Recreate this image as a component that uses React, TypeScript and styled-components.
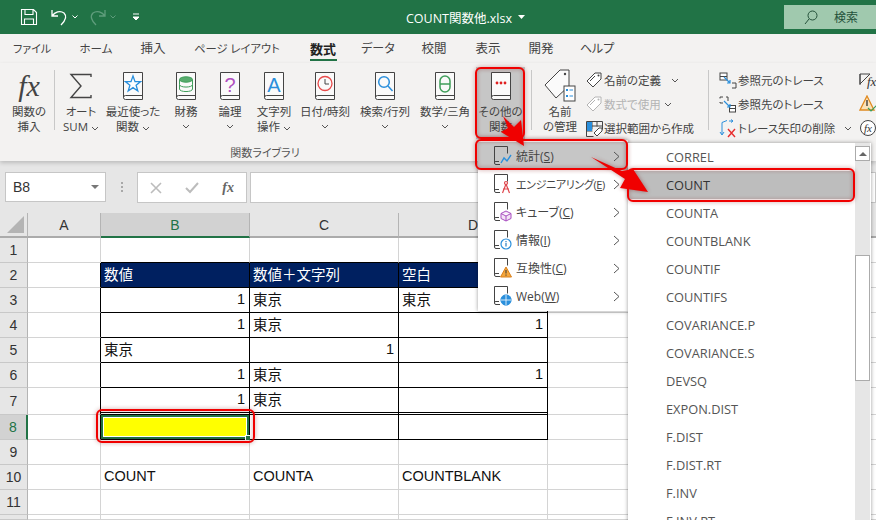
import { Fragment } from 'react';
import type { ReactNode } from 'react';
import styled, { createGlobalStyle } from 'styled-components';

const uiFont = '"Open Sans", "Noto Sans CJK JP", sans-serif';
const cellFont = '"Liberation Sans", "Noto Sans CJK JP", sans-serif';

const GlobalStyle = createGlobalStyle`
html, body {
  margin: 0;
  padding: 0;
  background: #fff;
}
body {
  font-family: ${uiFont};
  font-feature-settings: "palt";
}
`;

const Page = styled.div`
position: relative;
width: 876px;
height: 520px;
overflow: hidden;
display: flex;
flex-direction: column;
background: #fff;
`;

/* title bar */
const TitleBar = styled.div`
height: 34px;
flex: none;
display: flex;
align-items: center;
background: #217346;
color: #fff;
`;

const QuickTools = styled.div`
width: 406px;
flex: none;
display: flex;
align-items: center;
padding-left: 20px;
box-sizing: border-box;
`;

const QuickIcon = styled.svg<{ $gap?: number }>`
flex: none;
margin-right: ${(p) => p.$gap ?? 0}px;
`;

const FileName = styled.div`
font-size: 12.5px;
white-space: nowrap;
display: flex;
align-items: center;
gap: 6px;
`;

const SearchBox = styled.div`
margin-left: auto;
width: 92px;
height: 24px;
background: #a0c9ae;
color: #24513a;
font-size: 12px;
display: flex;
align-items: center;
padding-left: 20px;
gap: 16px;
box-sizing: border-box;
`;

/* tabs */
const TabRow = styled.div`
height: 29px;
flex: none;
display: flex;
background: #f3f2f1;
`;

const Tab = styled.div<{ $w: number; $size: number; $active?: boolean }>`
position: relative;
width: ${(p) => p.$w}px;
text-align: center;
line-height: 30px;
font-size: ${(p) => p.$size}px;
white-space: nowrap;
color: ${(p) => (p.$active ? '#222' : '#444')};
font-weight: ${(p) => (p.$active ? 700 : 400)};
&::after {
  content: '';
  display: ${(p) => (p.$active ? 'block' : 'none')};
  position: absolute;
  left: 14px;
  right: 13px;
  bottom: 2px;
  height: 2px;
  background: #217346;
}
`;

/* ribbon */
const Ribbon = styled.div`
height: 98px;
flex: none;
display: flex;
padding: 4px 0 0 5px;
box-sizing: border-box;
background: #f3f2f1;
overflow: hidden;
box-shadow: 0 2px 4px rgba(0, 0, 0, 0.18);
position: relative;
`;

const Group = styled.div`
display: flex;
flex-direction: column;
flex: none;
`;

const Tools = styled.div`
display: flex;
height: 72px;
`;

const GroupLabel = styled.div`
margin-top: 5px;
text-align: center;
font-size: 11px;
color: #555;
`;

const BigButton = styled.div<{ $w: number; $left?: number; $active?: boolean }>`
width: ${(p) => p.$w}px;
margin-left: ${(p) => p.$left ?? 0}px;
flex: none;
display: flex;
flex-direction: column;
align-items: center;
padding-top: 5px;
box-sizing: border-box;
background: ${(p) => (p.$active ? '#c6c6c6' : 'transparent')};
`;

const BigIcon = styled.div`
height: 28px;
display: flex;
align-items: center;
justify-content: center;
`;

const FxMark = styled.span`
font-family: "Liberation Serif", serif;
font-style: italic;
font-size: 30px;
line-height: 28px;
color: #444;
`;

const BigLabel = styled.div`
margin-top: 5px;
font-size: 11.5px;
line-height: 14.5px;
color: #444;
text-align: center;
white-space: nowrap;
`;

const ChevronLine = styled.div`
height: 14px;
display: flex;
align-items: center;
justify-content: center;
`;

const RibbonSep = styled.div<{ $left?: number; $right?: number }>`
width: 1px;
height: 60px;
flex: none;
margin: 3px ${(p) => p.$right ?? 0}px 0 ${(p) => p.$left ?? 0}px;
background: #c8c8c8;
`;

const ListColumn = styled.div<{ $w: number; $left?: number }>`
width: ${(p) => p.$w}px;
flex: none;
margin-left: ${(p) => p.$left ?? 0}px;
display: flex;
flex-direction: column;
padding-top: 1px;
`;

const ListRow = styled.div<{ $disabled?: boolean }>`
height: 24px;
display: flex;
align-items: center;
gap: 1px;
font-size: 11.5px;
white-space: nowrap;
color: ${(p) => (p.$disabled ? '#b4b4b4' : '#444')};
& > svg {
  flex: none;
}
`;

const RowChevron = styled.span<{ $left: number }>`
display: inline-flex;
margin-left: ${(p) => p.$left}px;
`;

/* formula bar */
const FormulaBar = styled.div`
height: 52px;
flex: none;
display: flex;
align-items: flex-start;
padding: 11px 0 0 5px;
box-sizing: border-box;
background: #e6e6e6;
`;

const NameBox = styled.div`
width: 101px;
height: 30px;
flex: none;
background: #fff;
border: 1px solid #c6c6c6;
box-sizing: border-box;
display: flex;
align-items: center;
justify-content: space-between;
padding: 0 4px 0 7px;
font-family: ${cellFont};
font-size: 14px;
color: #333;
`;

const Caret = styled.span`
width: 0;
height: 0;
border-left: 4px solid transparent;
border-right: 4px solid transparent;
border-top: 4px solid #777;
margin-right: 2px;
`;

const GripDots = styled.div`
width: 31px;
flex: none;
display: flex;
flex-direction: column;
align-items: center;
gap: 2px;
padding-top: 10px;
& > i {
  width: 2px;
  height: 2px;
  background: #a8a8a8;
}
`;

const FormulaButtons = styled.div`
width: 110px;
height: 31px;
flex: none;
background: #fff;
border: 1px solid #c6c6c6;
box-sizing: border-box;
display: flex;
align-items: center;
justify-content: space-between;
padding: 0 12px;
`;

const FormulaFx = styled.span`
font-family: "Liberation Serif", serif;
font-style: italic;
font-weight: 700;
font-size: 14px;
color: #666;
`;

const FormulaInput = styled.div`
flex: 1;
height: 31px;
margin-left: 3px;
background: #fff;
border: 1px solid #c6c6c6;
box-sizing: border-box;
`;

/* sheet */
const Sheet = styled.div`
flex: 1;
display: grid;
grid-template-columns: 28px 73px 149px 149px 149px 149px 149px 31px;
grid-template-rows: 25px repeat(6, 25px) 27px repeat(3, 25px) 25px 5px;
overflow: hidden;
font-family: ${cellFont};
font-size: 14.5px;
color: #111;
`;

const Corner = styled.div`
background: #e6e6e6;
border-right: 1px solid #b4b4b4;
border-bottom: 2px solid #ababab;
box-sizing: border-box;
display: flex;
align-items: flex-end;
justify-content: flex-end;
padding: 0 3px 3px 0;
`;

const ColHead = styled.div<{ $sel?: boolean }>`
display: flex;
align-items: center;
justify-content: center;
box-sizing: border-box;
font-size: 14px;
background: ${(p) => (p.$sel ? '#d2d2d2' : '#e6e6e6')};
color: ${(p) => (p.$sel ? '#217346' : '#333')};
border-right: 1px solid #b4b4b4;
border-bottom: 2px solid ${(p) => (p.$sel ? '#217346' : '#ababab')};
`;

const RowHead = styled.div<{ $sel?: boolean }>`
display: flex;
align-items: center;
justify-content: center;
box-sizing: border-box;
padding-bottom: 1px;
font-size: 14px;
background: ${(p) => (p.$sel ? '#d2d2d2' : '#e6e6e6')};
color: ${(p) => (p.$sel ? '#217346' : '#333')};
border-right: ${(p) => (p.$sel ? '2px solid #217346' : '1px solid #b4b4b4')};
border-bottom: 1px solid #c8c8c8;
`;

const Cell = styled.div<{
  $head?: boolean;
  $right?: boolean;
  $blackRight?: boolean;
  $blackBottom?: boolean;
  $double?: boolean;
  $fill?: boolean;
}>`
position: relative;
box-sizing: border-box;
display: flex;
align-items: center;
padding: 0 4px 3px 3px;
white-space: nowrap;
justify-content: ${(p) => (p.$right ? 'flex-end' : 'flex-start')};
background: ${(p) => (p.$head ? '#002060' : p.$fill ? '#ffff00' : '#fff')};
color: ${(p) => (p.$head ? '#fff' : '#111')};
border-right: 1px solid ${(p) => (p.$blackRight ? '#000' : '#d4d4d4')};
border-bottom: ${(p) =>
    p.$double ? '3px double #000' : `1px solid ${p.$blackBottom ? '#000' : '#d4d4d4'}`};
${(p) => (p.$fill ? 'box-shadow: inset 0 0 0 2px #217346, inset 0 0 0 3px #fff;' : '')}
`;

const FillHandle = styled.span`
position: absolute;
right: -3px;
bottom: -3px;
width: 5px;
height: 5px;
background: #217346;
border: 1px solid #fff;
`;

/* dropdown menus */
const Menu = styled.div`
position: absolute;
left: 478px;
top: 140px;
width: 150px;
padding: 2px 0 1px;
box-sizing: border-box;
background: #fff;
box-shadow: 0 0 4px rgba(0, 0, 0, 0.4);
z-index: 5;
`;

const MenuItem = styled.div<{ $active?: boolean }>`
height: 28px;
display: flex;
align-items: center;
padding: 0 8px 0 14px;
gap: 4px;
color: #444;
white-space: nowrap;
background: ${(p) => (p.$active ? '#c6c6c6' : 'transparent')};
& > svg {
  flex: none;
}
`;

const MenuLabel = styled.span<{ $tight?: boolean }>`
flex: 1;
font-size: ${(p) => (p.$tight ? 11 : 12)}px;
letter-spacing: ${(p) => (p.$tight ? '-0.35px' : '0')};
`;

const SubMenu = styled.div`
position: absolute;
left: 628px;
top: 143px;
width: 243px;
height: 390px;
display: flex;
background: #fff;
box-shadow: 0 0 4px rgba(0, 0, 0, 0.4);
z-index: 6;
`;

const SubList = styled.div`
width: 226px;
flex: none;
`;

const SubItem = styled.div<{ $active?: boolean }>`
height: 28px;
line-height: 28px;
padding-left: 38px;
font-size: 12.8px;
color: ${(p) => (p.$active ? '#333' : '#555')};
background: ${(p) => (p.$active ? '#bdbdbd' : 'transparent')};
`;

const ScrollBar = styled.div`
width: 15px;
flex: none;
margin-left: 1px;
background: #e6e6e6;
display: flex;
flex-direction: column;
`;

const ScrollUp = styled.div`
height: 15px;
margin-top: 3px;
background: #fff;
border: 1px solid #ababab;
box-sizing: border-box;
display: flex;
align-items: center;
justify-content: center;
&::before {
  content: '';
  border-left: 4px solid transparent;
  border-right: 4px solid transparent;
  border-bottom: 4px solid #666;
}
`;

const ScrollThumb = styled.div`
height: 126px;
margin-top: 94px;
background: #fff;
border: 1px solid #ababab;
box-sizing: border-box;
`;

/* red marks drawn over the shot */
const Marks = styled.svg`
position: absolute;
left: 0;
top: 0;
z-index: 10;
pointer-events: none;
filter: drop-shadow(0 0 2px rgba(120, 0, 0, 0.45));
`;

const Chevron = () => (
  <svg width="8" height="5" viewBox="0 0 8 5">
    <path d="M1 1l3 3 3-3" fill="none" stroke="#555" strokeWidth="1" />
  </svg>
);

const MenuArrow = () => (
  <svg width="7" height="11" viewBox="0 0 7 11">
    <path d="M1 1l5 4.5L1 10" fill="none" stroke="#555" strokeWidth="1" />
  </svg>
);

const Book = ({ children }: { children?: ReactNode }) => (
  <svg width="22" height="29" viewBox="0 0 22 29">
    <path d="M1.5.5h19v27H3.5q-2 0-2-2z" fill="#fafafa" stroke="#444" />
    <path d="M1.5 25.5q0-2 2-2h17" fill="none" stroke="#444" />
    {children}
  </svg>
);

const bookIcons: Record<string, ReactNode> = {
  star: <path d="M11 4l2 5.6h5.6l-4.5 3.6 1.7 5.8-4.8-3.4-4.8 3.4 1.7-5.8-4.5-3.6H9z" fill="#fff" stroke="#2a8fdc" strokeWidth="1.3" />,
  db: (
    <g fill="#cfe8d4" stroke="#3f9e5a">
      <ellipse cx="11" cy="7.5" rx="6.5" ry="2.7" fill="#58ac6e" />
      <path d="M4.5 8v4.5c0 3.4 13 3.4 13 0V8M4.5 12.5V17c0 3.4 13 3.4 13 0v-4.5" fill="none" />
    </g>
  ),
  help: <text x="11" y="20" textAnchor="middle" fontSize="20" fontFamily="Liberation Sans" fill="#b050c0">?</text>,
  letter: <text x="11" y="20" textAnchor="middle" fontSize="20" fontFamily="Liberation Sans" fill="#2a8fdc">A</text>,
  clock: (
    <g fill="none" stroke="#e84a4a" strokeWidth="1.3">
      <circle cx="11" cy="11.5" r="7" />
      <path d="M11 7v5h4" strokeWidth="1" stroke="#444" />
    </g>
  ),
  lookup: (
    <g fill="none" stroke="#2a8fdc" strokeWidth="1.5">
      <circle cx="10" cy="10" r="5.3" />
      <path d="M14 14l4.5 5" />
    </g>
  ),
  theta: (
    <g fill="none" stroke="#3f9e5a" strokeWidth="1.5">
      <rect x="6" y="4" width="10" height="16" rx="5" />
      <path d="M6 12h10" />
    </g>
  ),
  more: (
    <g fill="#e02020">
      <circle cx="7" cy="11" r="1.4" />
      <circle cx="11" cy="11" r="1.4" />
      <circle cx="15" cy="11" r="1.4" />
    </g>
  ),
};

const SigmaIcon = () => (
  <svg width="24" height="26" viewBox="0 0 24 26">
    <path d="M22 4V1.5H2L12 13 2 24.5h20V22" fill="none" stroke="#444" strokeWidth="1.4" />
  </svg>
);

const TagIcon = () => (
  <svg width="32" height="34" viewBox="0 0 32 34">
    <path d="M1 16L16 1h9v16L12 29z" fill="#fafafa" stroke="#444" />
    <circle cx="21" cy="5" r="1.2" fill="#444" />
    <rect x="20" y="17" width="11" height="15" fill="#fff" stroke="#444" />
    <path d="M22 21h2M22 27h2" stroke="#2a8fdc" strokeWidth="2" />
    <path d="M25.5 21H29M25.5 27H29" stroke="#2a8fdc" />
  </svg>
);

const SmallTag = ({ color }: { color: string }) => (
  <svg width="17" height="17" viewBox="0 0 17 17">
    <path d="M1 9l8-8h6v6l-8 8z" fill="#fff" stroke={color} />
    <path d="M4 9l5-5" stroke={color} />
    <circle cx="12.5" cy="3.5" r="1" fill={color} />
  </svg>
);

const FromSelection = () => (
  <svg width="17" height="17" viewBox="0 0 17 17">
    <path d="M.5 1.5h16v8" fill="none" stroke="#444" />
    <path d="M.5 1.5v15h7M6 1.5v8M11 1.5v5M.5 6h16M.5 11h6" fill="none" stroke="#444" />
    <rect x="1" y="2" width="5" height="4" fill="#2a8fdc" />
    <rect x="1" y="6" width="5" height="5" fill="#2a8fdc" />
    <path d="M8 13l5-5h3v3l-5 5z" fill="#fff" stroke="#444" />
  </svg>
);

const TraceFrom = ({ flip }: { flip?: boolean }) => (
  <svg width="18" height="17" viewBox="0 0 18 17">
    {flip ? (
      <>
        <path d="M1 2.5V1h3M7 1h2v4M1 6v1h3" fill="none" stroke="#444" />
        <rect x="10.5" y="9.5" width="6" height="6.5" fill="#fff" stroke="#444" />
        <path d="M10.5 12.5h6" stroke="#444" />
      </>
    ) : (
      <>
        <rect x="1" y="1" width="7" height="7" fill="#fff" stroke="#444" />
        <path d="M1 4.5h7" stroke="#444" />
        <path d="M13 11h4v5h-4" fill="none" stroke="#444" />
      </>
    )}
    <path d="M5 5l6 6M11 8v3H8" fill="none" stroke="#2a8fdc" strokeWidth="1.2" />
  </svg>
);

const TraceRemove = () => (
  <svg width="18" height="19" viewBox="0 0 18 19">
    <path d="M3 15V3.5M3 3.5l5-2M10 2h4M14 2l-2-1.5M14 2l-2 1.500" fill="none" stroke="#2a8fdc" />
    <path d="M1 13l2 3 2-3" fill="none" stroke="#2a8fdc" />
    <path d="M9 10l7 8M16 10l-7 8" stroke="#e82c2c" strokeWidth="1.4" />
  </svg>
);

const menuIcons: Record<string, ReactNode> = {
  chart: <path d="M9 17l3-5 3 3 4-6" fill="none" stroke="#2a8fdc" strokeWidth="1.4" />,
  compass: (
    <g fill="none" stroke="#e0484e" strokeWidth="1.2">
      <circle cx="14" cy="9" r="1.5" />
      <path d="M14 10l-3.500 9M14 10l3.500 9M11 15h6" />
    </g>
  ),
  cube: <path d="M14 9l5 2.500v5L14 19l-5-2.500v-5zM9 11.500l5 2.500 5-2.500M14 14v5" fill="#f3e2f6" stroke="#a84cc0" />,
  info: (
    <g>
      <circle cx="14" cy="14" r="5" fill="#fff" stroke="#2a8fdc" strokeWidth="1.2" />
      <path d="M14 13v3.500M14 11v1.200" stroke="#2a7fc0" strokeWidth="1.2" />
    </g>
  ),
  warn: (
    <g>
      <path d="M14 9l5.500 10h-11z" fill="#f4a63c" stroke="#d9801c" />
      <path d="M14 12v3.500M14 16.500v1.200" stroke="#333" />
    </g>
  ),
  web: (
    <g fill="none" stroke="#fff" strokeWidth=".8">
      <circle cx="14" cy="14" r="5.200" fill="#2a8fdc" stroke="#2a8fdc" />
      <path d="M8.800 14h10.400M14 8.800v10.400" />
    </g>
  ),
};

const MenuIcon = ({ kind }: { kind: string }) => (
  <svg width="20" height="20" viewBox="0 0 20 20">
    <path d="M2.500.5h13v7M2.500.5V17q0 1.500 1.500 1.500h4" fill="none" stroke="#444" />
    <path d="M2.500 16.500q0-1 1.500-1h3" fill="none" stroke="#444" />
    {menuIcons[kind]}
  </svg>
);

const tabs = [
  { name: 'ファイル', w: 64, size: 11 },
  { name: 'ホーム', w: 64, size: 11.5 },
  { name: '挿入', w: 50, size: 12.5 },
  { name: 'ページ レイアウト', w: 118, size: 11.3 },
  { name: '数式', w: 54, size: 13, active: true },
  { name: 'データ', w: 56, size: 12 },
  { name: '校閲', w: 56, size: 12.5 },
  { name: '表示', w: 52, size: 12.5 },
  { name: '開発', w: 54, size: 12.5 },
  { name: 'ヘルプ', w: 58, size: 12 },
];

const functionButtons = [
  { icon: 'sigma', w: 40, lines: ['オート', 'SUM'], chevron: 'inline' },
  { icon: 'star', w: 64, lines: ['最近使った', '関数'], chevron: 'inline' },
  { icon: 'db', w: 42, lines: ['財務'], chevron: 'below' },
  { icon: 'help', w: 46, lines: ['論理'], chevron: 'below' },
  { icon: 'letter', w: 42, lines: ['文字列', '操作'], chevron: 'inline' },
  { icon: 'clock', w: 60, lines: ['日付/時刻'], chevron: 'below' },
  { icon: 'lookup', w: 60, lines: ['検索/行列'], chevron: 'below' },
  { icon: 'theta', w: 60, lines: ['数学/三角'], chevron: 'below' },
];

const menuItems = [
  { icon: 'chart', label: '統計(', key: 'S', active: true },
  { icon: 'compass', label: 'エンジニアリング(', key: 'E', tight: true },
  { icon: 'cube', label: 'キューブ(', key: 'C' },
  { icon: 'info', label: '情報(', key: 'I' },
  { icon: 'warn', label: '互換性(', key: 'C' },
  { icon: 'web', label: 'Web(', key: 'W' },
];

const functionNames = [
  'CORREL', 'COUNT', 'COUNTA', 'COUNTBLANK', 'COUNTIF', 'COUNTIFS', 'COVARIANCE.P',
  'COVARIANCE.S', 'DEVSQ', 'EXPON.DIST', 'F.DIST', 'F.DIST.RT', 'F.INV', 'F.INV.RT',
];

const columns = ['A', 'B', 'C', 'D', 'E', 'F', ''];

const rows: string[][] = [
  ['', '', '', ''],
  ['', '数値', '数値＋文字列', '空白'],
  ['', '1', '東京', '東京'],
  ['', '1', '東京', '1'],
  ['', '東京', '1', ''],
  ['', '1', '東京', '1'],
  ['', '1', '東京', ''],
  ['', '', '', ''],
  ['', '', '', ''],
  ['', 'COUNT', 'COUNTA', 'COUNTBLANK'],
  ['', '', '', ''],
  ['', '', '', ''],
];

const App = () => {
  return (
    <Page>
      <GlobalStyle />
      <TitleBar>
        <QuickTools>
          <QuickIcon $gap={12} width="18" height="18" viewBox="0 0 18 18">
            <path d="M1.500 1.500h12l3 3v12h-15z M5 1.500v5h8v-5 M4.500 16.500v-5.500h9v5.500" fill="none" stroke="#fff" strokeWidth="1.1" />
          </QuickIcon>
          <QuickIcon $gap={2} width="20" height="18" viewBox="0 0 20 18">
            <path d="M2 2v6h6M2 8c3-4 8-6 12-3 3 3 2 7-3 12" fill="none" stroke="#fff" strokeWidth="1.300" />
          </QuickIcon>
          <QuickIcon $gap={9} width="6" height="4" viewBox="0 0 6 4">
            <path d="M.5.500L3 3l2.500-2.500" fill="none" stroke="#fff" />
          </QuickIcon>
          <QuickIcon $gap={3} width="20" height="18" viewBox="0 0 20 18">
            <path d="M18 2v6h-6M18 8c-3-4-8-6-12-3-3 3-2 7 3 12" fill="none" stroke="#5f9d7c" strokeWidth="1.300" />
          </QuickIcon>
          <QuickIcon $gap={16} width="6" height="4" viewBox="0 0 6 4">
            <path d="M.5.500L3 3l2.500-2.500" fill="none" stroke="#5f9d7c" />
          </QuickIcon>
          <QuickIcon width="8" height="8" viewBox="0 0 8 8">
            <path d="M1 1h6M1 4l3 3 3-3z" fill="#fff" stroke="#fff" strokeWidth="1" />
          </QuickIcon>
        </QuickTools>
        <FileName>
          COUNT関数他.xlsx
          <svg width="7" height="4" viewBox="0 0 7 4"><path d="M0 0h7L3.500 4z" fill="#fff" /></svg>
        </FileName>
        <SearchBox>
          <svg width="14" height="15" viewBox="0 0 14 15">
            <circle cx="8.500" cy="5.500" r="4.500" fill="none" stroke="#24513a" />
            <path d="M5 9l-4 5" stroke="#24513a" />
          </svg>
          検索
        </SearchBox>
      </TitleBar>

      <TabRow>
        {tabs.map((item, index) => (
          <Tab key={index} $w={item.w} $size={item.size} $active={item.active}>{item.name}</Tab>
        ))}
      </TabRow>

      <Ribbon>
        <Group>
          <Tools>
            <BigButton $w={48}>
              <BigIcon><FxMark>fx</FxMark></BigIcon>
              <BigLabel>関数の<br />挿入</BigLabel>
            </BigButton>
            <RibbonSep $left={1} $right={6} />
            {functionButtons.map((item, index) => (
              <BigButton key={index} $w={item.w}>
                <BigIcon>
                  {item.icon === 'sigma' ? <SigmaIcon /> : <Book>{bookIcons[item.icon]}</Book>}
                </BigIcon>
                <BigLabel>
                  {item.lines[0]}
                  {item.lines[1] && <br />}
                  {item.lines[1]}
                  {item.chevron === 'inline' && <> <Chevron /></>}
                </BigLabel>
                {item.chevron === 'below' && <ChevronLine><Chevron /></ChevronLine>}
              </BigButton>
            ))}
            <BigButton $w={49} $left={1} $active>
              <BigIcon><Book>{bookIcons.more}</Book></BigIcon>
              <BigLabel>その他の<br />関数</BigLabel>
            </BigButton>
          </Tools>
          <GroupLabel>関数ライブラリ</GroupLabel>
        </Group>
        <RibbonSep $left={6} $right={2} />
        <BigButton $w={52}>
          <BigIcon><TagIcon /></BigIcon>
          <BigLabel>名前<br />の管理</BigLabel>
        </BigButton>
        <ListColumn $w={122}>
          <ListRow><SmallTag color="#444" />名前の定義<RowChevron $left={9}><Chevron /></RowChevron></ListRow>
          <ListRow $disabled><SmallTag color="#b4b4b4" />数式で使用<RowChevron $left={2}><Chevron /></RowChevron></ListRow>
          <ListRow><FromSelection />選択範囲から作成</ListRow>
        </ListColumn>
        <RibbonSep />
        <ListColumn $w={140} $left={10}>
          <ListRow><TraceFrom />参照元のトレース</ListRow>
          <ListRow><TraceFrom flip />参照先のトレース</ListRow>
          <ListRow><TraceRemove />トレース矢印の削除<RowChevron $left={8}><Chevron /></RowChevron></ListRow>
        </ListColumn>
        <ListColumn $w={20}>
          <ListRow>
            <svg width="20" height="17" viewBox="0 0 20 17">
              <path d="M1 2h10L1 12zM1 2v11" fill="none" stroke="#444" />
              <text x="8" y="14" fontSize="13" fontStyle="italic" fontFamily="Liberation Serif" fill="#333">fx</text>
            </svg>
          </ListRow>
          <ListRow>
            <svg width="20" height="18" viewBox="0 0 20 18">
              <path d="M8 1l7 14H1z" fill="#fbe2b8" stroke="#e08a20" strokeWidth="1.300" />
              <path d="M8 5v6" stroke="#333" strokeWidth="1.300" />
              <path d="M9 13l3 3 6-6" fill="none" stroke="#3f9e5a" strokeWidth="1.200" />
            </svg>
          </ListRow>
          <ListRow>
            <svg width="20" height="18" viewBox="0 0 20 18">
              <circle cx="9" cy="9" r="7.500" fill="#fff" stroke="#444" />
              <text x="9" y="13" textAnchor="middle" fontSize="11" fontStyle="italic" fontFamily="Liberation Serif" fill="#333">fx</text>
            </svg>
          </ListRow>
        </ListColumn>
      </Ribbon>

      <FormulaBar>
        <NameBox>B8<Caret /></NameBox>
        <GripDots><i /><i /><i /></GripDots>
        <FormulaButtons>
          <svg width="12" height="12" viewBox="0 0 12 12"><path d="M1 1l10 10M11 1L1 11" stroke="#bcbcbc" strokeWidth="1.600" /></svg>
          <svg width="14" height="12" viewBox="0 0 14 12"><path d="M1 6l4 4 8-9" fill="none" stroke="#bcbcbc" strokeWidth="2" /></svg>
          <FormulaFx>fx</FormulaFx>
        </FormulaButtons>
        <FormulaInput />
      </FormulaBar>

      <Sheet>
        <Corner>
          <svg width="17" height="17" viewBox="0 0 17 17"><path d="M17 0v17H0z" fill="#b4b4b4" /></svg>
        </Corner>
        {columns.map((col, index) => (
          <ColHead key={index} $sel={col === 'B'}>{col}</ColHead>
        ))}
        {rows.map((row, r) => (
          <Fragment key={r}>
            <RowHead $sel={r === 7}>{r < 11 ? r + 1 : ''}</RowHead>
            {columns.map((_, c) => {
              const text = row[c] ?? '';
              const inTable = r >= 1 && r <= 7 && c >= 1 && c <= 3;
              const fill = r === 7 && c === 1;
              return (
                <Cell
                  key={c}
                  $head={r === 1 && c >= 1 && c <= 3}
                  $right={r >= 2 && r <= 6 && text === '1'}
                  $blackRight={inTable || (r >= 1 && r <= 7 && c === 0)}
                  $blackBottom={inTable || (r === 0 && c >= 1 && c <= 3)}
                  $double={r === 6 && c >= 1 && c <= 3}
                  $fill={fill}
                >
                  {text}
                  {fill && <FillHandle />}
                </Cell>
              );
            })}
          </Fragment>
        ))}
      </Sheet>

      <Menu>
        {menuItems.map((item, index) => (
          <MenuItem key={index} $active={item.active}>
            <MenuIcon kind={item.icon} />
            <MenuLabel $tight={item.tight}>{item.label}<u>{item.key}</u>)</MenuLabel>
            <MenuArrow />
          </MenuItem>
        ))}
      </Menu>

      <SubMenu>
        <SubList>
          {functionNames.map((name, index) => (
            <SubItem key={index} $active={name === 'COUNT'}>{name}</SubItem>
          ))}
        </SubList>
        <ScrollBar>
          <ScrollUp />
          <ScrollThumb />
        </ScrollBar>
      </SubMenu>

      <Marks width="876" height="520" viewBox="0 0 876 520">
        <g fill="none" stroke="#f00000" strokeWidth="2">
          <rect x="476" y="68" width="48" height="70" rx="5" />
          <rect x="476" y="140" width="151" height="29" rx="5" />
          <rect x="628" y="169" width="226" height="32" rx="5" />
          <rect x="97" y="410" width="157" height="32" rx="5" />
        </g>
        <polygon points="503,116 514,127 521,120 524,146 501,132 508,128" fill="#f00000" />
        <polygon points="591,157 622,171 633,169 648,192 620,188 625,179" fill="#f00000" />
      </Marks>
    </Page>
  );
};

export default App;
